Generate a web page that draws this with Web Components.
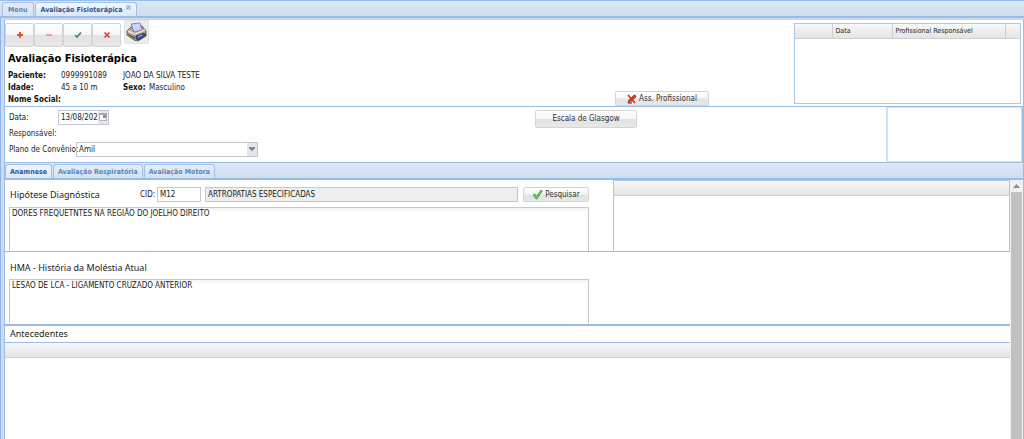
<!DOCTYPE html>
<html lang="pt-BR">
<head>
<meta charset="utf-8">
<title>Avaliação Fisioterápica</title>
<style>
  body {
    margin: 0;
    background: #fff;
    color: #222;
    font-family: "DejaVu Sans Condensed", "DejaVu Sans", Tahoma, sans-serif;
    font-stretch: condensed;
    font-size: 8px;
    line-height: 12px;
  }
</style>
</head>
<body>
<physio-app></physio-app>

<script>
// small helper: every element gets an open shadow root with its own markup
function define(name, html) {
  customElements.define(name, class extends HTMLElement {
    constructor() {
      super();
      this.attachShadow({ mode: 'open' });
    }
    connectedCallback() {
      this.shadowRoot.innerHTML = typeof html === 'function' ? html(this) : html;
    }
  });
}

define('tab-item', el => `
  <style>
    :host { display: block; }
    button {
      display: flex;
      align-items: center;
      height: 100%;
      padding: 0 var(--tab-padding, 4px);
      border: 1px solid #a3c0e8;
      border-bottom: none;
      border-radius: 3px 3px 0 0;
      background: linear-gradient(#e3edfa, #d3e2f5);
      color: #6484b0;
      font: bold 7px/12px "DejaVu Sans Condensed", "DejaVu Sans", sans-serif;
      font-stretch: condensed;
      white-space: nowrap;
    }
    :host([active]) button {
      background: linear-gradient(#f0f6ff, #dce8f8);
      color: #2f5490;
    }
    .close { align-self: flex-start; width: 5px; height: 5px; margin: 2px 0 0 3px; }
  </style>
  <button type="button" role="tab" aria-selected="${el.hasAttribute('active')}">
    <slot></slot>
    ${el.hasAttribute('closable') ? `<svg class="close" viewBox="0 0 5 5"><rect width="5" height="5" rx="1" fill="#c3d5ed"/><path d="M1 1l3 3M4 1L1 4" stroke="#8ca8d0"/></svg>` : ''}
  </button>
`);

define('tab-strip', `
  <style>
    :host {
      display: flex;
      gap: 1px;
      box-sizing: border-box;
      height: 18px;
      padding-top: 1px;
      border-top: 1px solid #99bce8;
      border-bottom: 2px solid #99bce8;
      background: linear-gradient(#dde8f6, #cddcf0);
    }
  </style>
  <slot></slot>
`);

define('push-button', el => `
  <style>
    :host { display: block; height: 15px; }
    button {
      display: flex;
      align-items: center;
      justify-content: center;
      gap: 2px;
      box-sizing: border-box;
      width: 100%;
      height: 100%;
      padding: 0;
      border: 1px solid #d4d4d4;
      border-radius: 2px;
      background: linear-gradient(#fefefe, #f6f6f6 48%, #e2e2e2 52%, #e8e8e8);
      color: #333;
      font: 8px/12px "DejaVu Sans Condensed", "DejaVu Sans", sans-serif;
      font-stretch: condensed;
      white-space: nowrap;
    }
    :host([flat]) button { background: #ececec; border-color: #e2e2e2; }
    ::slotted(svg) { flex: none; }
  </style>
  <button type="button" ${el.hasAttribute('label') ? `aria-label="${el.getAttribute('label')}"` : ''}><slot></slot></button>
`);

define('text-field', el => `
  <style>
    :host { display: flex; align-items: center; }
    label { flex: none; width: var(--label-width, auto); white-space: nowrap; }
    .box {
      display: flex;
      flex: 1;
      min-width: 0;
      box-sizing: border-box;
      height: 15px;
      border: 1px solid #c3c8d2;
      background: #fff;
    }
    :host([readonly]) .box { background: #eee; }
    input {
      flex: 1;
      min-width: 0;
      padding: 0 0 0 2px;
      border: none;
      background: none;
      color: #222;
      font: inherit;
    }
    button {
      flex: none;
      width: 10px;
      padding: 0;
      border: none;
      background: #e4e6ec;
      line-height: 0;
    }
  </style>
  ${el.hasAttribute('label') ? `<label for="field">${el.getAttribute('label')}</label>` : ''}
  <div class="box">
    <input id="field" type="text" value="${el.getAttribute('value')}"
      ${el.hasAttribute('label') ? '' : 'aria-label="Descrição"'} ${el.hasAttribute('readonly') ? 'readonly' : ''}>
    ${el.hasAttribute('date') ? `<button type="button" aria-label="Calendário"><svg width="10" height="11" viewBox="0 0 10 11"><path d="M1.500 2.500h7v6h-7z" fill="#fff" stroke="#b0b5c6"/><path d="M1 1h8v2H1z" fill="#a2a8bc"/><path d="M5 3h3v3H5z" fill="#c77979"/></svg></button>` : ''}
  </div>
`);

define('select-field', el => `
  <style>
    :host { display: flex; align-items: center; }
    label { flex: none; width: var(--label-width, auto); white-space: nowrap; }
    .box {
      display: grid;
      grid-template-columns: 1fr 10px;
      flex: 1;
      box-sizing: border-box;
      height: 15px;
      border: 1px solid #c3c8d2;
    }
    select {
      grid-area: 1 / 1 / 2 / 3;
      appearance: none;
      padding: 0 2px;
      border: none;
      background: none;
      color: #222;
      font: inherit;
    }
    svg { grid-area: 1 / 2; background: #e4e6ec; pointer-events: none; }
  </style>
  <label for="field">${el.getAttribute('label')}</label>
  <div class="box">
    <select id="field"><option>${el.getAttribute('value')}</option></select>
    <svg width="10" height="13" viewBox="0 0 10 13"><path d="M2 4h2l1 1 1-1h2v1L5 8 2 5z" fill="#66769c"/></svg>
  </div>
`);

define('data-grid', el => `
  <style>
    :host { display: block; box-sizing: border-box; border: 1px solid #a9c8ef; }
    table { width: 100%; border-collapse: collapse; table-layout: fixed; }
    th {
      box-sizing: border-box;
      height: 14px;
      padding: 0 3px;
      border-bottom: 1px solid #cfcfcf;
      border-right: 1px solid #cfcfcf;
      background: linear-gradient(#f8f8f8, #e4e4e4);
      font: 7px/12px "DejaVu Sans Condensed", "DejaVu Sans", sans-serif;
      font-stretch: condensed;
      text-align: left;
      white-space: nowrap;
    }
    th:last-child { border-right: none; }
  </style>
  <table>
    <colgroup>${(el.getAttribute('widths') || 'auto').split(',').map(w => `<col style="width:${w}">`).join('')}</colgroup>
    <thead><tr>${(el.getAttribute('columns') || '').split(',').map(c => `<th scope="col">${c}</th>`).join('')}</tr></thead>
  </table>
`);

define('memo-field', el => `
  <style>
    :host { display: block; height: 44px; overflow: hidden; }
    textarea {
      display: block;
      box-sizing: border-box;
      width: 100%;
      height: 60px;
      padding: 0 2px;
      border: 1px solid #c3c8d2;
      background: linear-gradient(#f1f3f3, #fff 4px);
      color: #222;
      font: inherit;
      resize: none;
    }
  </style>
  <textarea aria-label="${el.getAttribute('label')}">${el.getAttribute('value')}</textarea>
`);

define('tool-bar', `
  <style>
    :host { display: flex; align-items: flex-start; }
    push-button { width: 29px; height: 24px; }
    .print { width: 25px; margin-left: 3px; }
    .tools { display: flex; padding-top: 3px; }
  </style>
  <div class="tools">
    <push-button label="Incluir"><svg width="8" height="8" viewBox="0 0 8 8"><path d="M4 1v6M1 4h6" stroke="#dd5430" stroke-width="2"/></svg></push-button>
    <push-button label="Excluir"><svg width="8" height="8" viewBox="0 0 8 8"><path d="M1 4h6" stroke="#eba38f" stroke-width="2"/></svg></push-button>
    <push-button label="Salvar"><svg width="8" height="8" viewBox="0 0 8 8"><path d="M1 4l2 2 4-4.500" fill="none" stroke="#3b8f4d" stroke-width="1.600"/></svg></push-button>
    <push-button label="Cancelar"><svg width="8" height="8" viewBox="0 0 8 8"><path d="M1.500 1.500l5 5M6.500 1.500l-5 5" stroke="#d9412f" stroke-width="1.600"/></svg></push-button>
  </div>
  <push-button class="print" label="Imprimir" flat>
    <svg width="22" height="20" viewBox="0 0 22 20">
      <path d="M1 9l4-4 11-1 4 5v5l-8 5-4-1-7-5z" fill="#b9a598" stroke="#5c4f4a" stroke-width=".9"/>
      <path d="M5 2l9-1 2 7-8 2z" fill="#c9d2fa" stroke="#6d71a0" stroke-width=".8"/>
      <path d="M2 9l7 3 10-4" fill="none" stroke="#eadfd6" stroke-width="1.400"/>
      <path d="M2 12l7 3v2l-7-4z" fill="#5b514c"/>
      <path d="M10 14l8-3 2 2-7 5-3-1z" fill="#3c4f96" stroke="#262c4d" stroke-width=".7"/>
      <path d="M12 15l4-2" stroke="#8bd0d4"/>
    </svg>
  </push-button>
`);

define('patient-header', `
  <style>
    :host {
      display: flex;
      justify-content: space-between;
      box-sizing: border-box;
      height: 86px;
      padding-right: 2px;
    }
    .info { flex: 0 0 610px; display: flex; flex-direction: column; }
    h1 { margin: 3px; font-size: 11px; line-height: 17px; color: #000; }
    dl { display: grid; grid-template-columns: 53px 62px 26px 1fr; margin: 0 0 0 3px; }
    dt { font-weight: bold; color: #111; white-space: nowrap; }
    dd { margin: 0; }
    .wide { grid-column: span 2; }
    .sign { align-self: flex-end; width: 94px; }
    data-grid { flex: 0 0 227px; height: 81px; margin: 3px 0 0 auto; }
  </style>
  <div class="info">
    <tool-bar></tool-bar>
    <h1>Avaliação Fisioterápica</h1>
    <dl>
      <dt>Paciente:</dt><dd>0999991089</dd><dd class="wide">JOAO DA SILVA TESTE</dd>
      <dt>Idade:</dt><dd>45 a 10 m</dd><dt>Sexo:</dt><dd>Masculino</dd>
      <dt>Nome Social:</dt>
    </dl>
  </div>
  <push-button class="sign">
    <svg width="10" height="10" viewBox="0 0 10 10">
      <path d="M1 9l1-3 5-5 2 2-5 5z" fill="#b9a04a" stroke="#5a5147" stroke-width=".8"/>
      <path d="M7 1l2 2" stroke="#9a5f9d" stroke-width="2"/>
      <path d="M1 9h4" stroke="#4f8a4a" stroke-width="1.500"/>
      <path d="M1 1l7 8M8 2L1 8" stroke="#e1261c" stroke-width="1.600"/>
    </svg>
    Ass. Profissional
  </push-button>
  <data-grid columns=",Data,Profissional Responsável," widths="37px,60px,auto,15px"></data-grid>
`);

define('visit-form', `
  <style>
    :host {
      display: flex;
      box-sizing: border-box;
      height: 56px;
      border: 1px solid #99bce8;
      border-width: 1px 1px 0 0;
    }
    .fields {
      display: flex;
      flex: 0 0 530px;
      flex-direction: column;
      gap: 1px;
      box-sizing: border-box;
      padding: 3px 0 0 4px;
    }
    .date { --label-width: 49px; width: 100px; }
    .plan { --label-width: 67px; width: 249px; }
    .line { line-height: 15px; }
    .scale { width: 102px; height: 18px; margin-top: 3px; }
    .side { flex: 0 0 133px; margin-left: auto; border: 1px solid #d3e1f5; border-left-width: 2px; }
  </style>
  <div class="fields">
    <text-field class="date" label="Data:" value="13/08/202" date></text-field>
    <div class="line">Responsável:</div>
    <select-field class="plan" label="Plano de Convênio:" value="Amil"></select-field>
  </div>
  <push-button class="scale">Escala de Glasgow</push-button>
  <div class="side"></div>
`);

define('scroll-rail', `
  <style>
    :host { display: flex; flex-direction: column; flex: 0 0 13px; background: #f0f0f0; }
    svg { flex: none; width: 13px; height: 12px; }
    .thumb { flex: 1; margin: 0 1px; background: #c1c1c1; }
  </style>
  <svg viewBox="0 0 13 12"><path d="M3 8l3.500-4L10 8z" fill="#8c8c8c"/></svg>
  <div class="thumb"></div>
`);

define('anamnesis-panel', `
  <style>
    :host { display: flex; flex: 1; }
    .content { flex: 1; min-width: 0; }
    section {
      display: flex;
      box-sizing: border-box;
      height: 72px;
      border-bottom: 1px solid #99bce8;
      overflow: hidden;
    }
    section.history { height: 74px; border-bottom-width: 2px; }
    .main { flex: 0 0 580px; padding-left: 4px; }
    .row { display: flex; align-items: center; height: 15px; margin: 7px 0 5px; }
    h2 { margin: 0; padding: 0 1px; font: 9px/15px "Noto Sans", sans-serif; }
    .row h2 { box-sizing: border-box; flex: 0 0 131px; }
    .cid { --label-width: 17px; width: 61px; }
    .name { flex: 1; margin: 0 5px 0 4px; }
    .find { width: 66px; }
    .history h2 { margin: 8px 0 4px; }
    .results { flex: 1; margin-left: 24px; border-bottom: none; }
    .background h2 { padding: 0 5px; line-height: 16px; border-bottom: 1px solid #99bce8; }
    .background data-grid { border-width: 0; }
  </style>
  <div class="content">
    <section>
      <div class="main">
        <div class="row">
          <h2>Hipótese Diagnóstica</h2>
          <text-field class="cid" label="CID:" value="M12"></text-field>
          <text-field class="name" value="ARTROPATIAS ESPECIFICADAS" readonly></text-field>
          <push-button class="find">
            <svg width="11" height="11" viewBox="0 0 11 11"><path d="M1 6l2-1 1.500 2L9 1l1.500 1L5 10H4z" fill="#5fcb55" stroke="#3ca33e" stroke-width=".7"/></svg>
            Pesquisar
          </push-button>
        </div>
        <memo-field label="Hipótese Diagnóstica" value="DORES FREQUETNTES NA REGIÃO DO JOELHO DIREITO"></memo-field>
      </div>
      <data-grid class="results"></data-grid>
    </section>
    <section class="history">
      <div class="main">
        <h2>HMA - História da Moléstia Atual</h2>
        <memo-field label="HMA - História da Moléstia Atual" value="LESAO DE LCA - LIGAMENTO CRUZADO ANTERIOR"></memo-field>
      </div>
    </section>
    <div class="background">
      <h2>Antecedentes</h2>
      <data-grid></data-grid>
    </div>
  </div>
  <scroll-rail></scroll-rail>
`);

define('physio-app', `
  <style>
    :host { display: flex; flex-direction: column; min-height: 100vh; }
    .documents { --tab-padding: 5px; padding-left: 2px; }
    .frame {
      display: flex;
      flex: 1;
      flex-direction: column;
      padding: 1px 0 0 4px;
      background: linear-gradient(90deg, #8fb4e6 1px, #cddcf0 1px);
    }
    .window {
      display: flex;
      flex: 1;
      flex-direction: column;
      border: 1px solid #99bce8;
      border-top-color: #c3d5ec;
      border-bottom: none;
      background: #fff;
    }
  </style>
  <tab-strip class="documents" role="tablist">
    <tab-item>Menu</tab-item>
    <tab-item active closable>Avaliação Fisioterápica</tab-item>
  </tab-strip>
  <div class="frame">
    <div class="window">
      <patient-header></patient-header>
      <visit-form></visit-form>
      <tab-strip role="tablist">
        <tab-item active>Anamnese</tab-item>
        <tab-item>Avaliação Respiratória</tab-item>
        <tab-item>Avaliação Motora</tab-item>
      </tab-strip>
      <anamnesis-panel></anamnesis-panel>
    </div>
  </div>
`);
</script>
</body>
</html>
